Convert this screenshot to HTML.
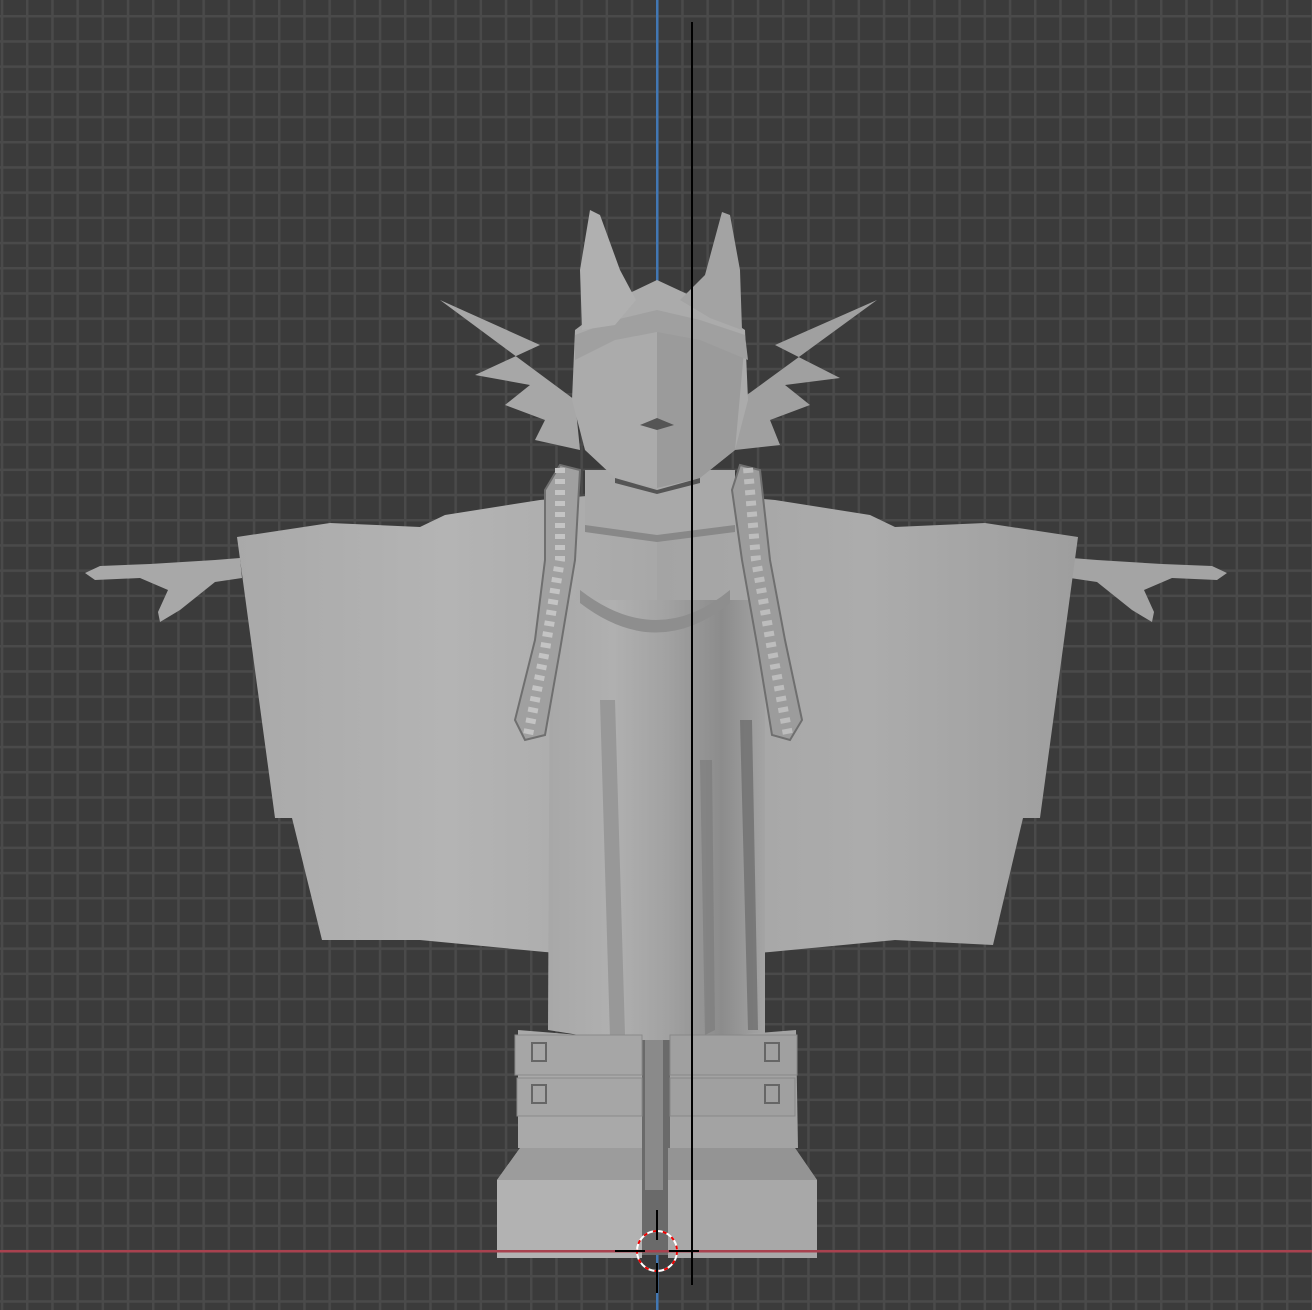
<!DOCTYPE html>
<html><head><meta charset="utf-8"><style>
html,body{margin:0;padding:0;background:#3d3d3d;}
svg{display:block}
</style></head><body>
<svg width="1312" height="1310" viewBox="0 0 1312 1310" xmlns="http://www.w3.org/2000/svg">
<defs>
<pattern id="g" x="0.8" y="15" width="25.2" height="25.2" patternUnits="userSpaceOnUse">
<rect width="25.2" height="25.2" fill="#3b3b3b"/>
<rect x="0" y="0" width="2.5" height="25.2" fill="#4a4a4a"/>
<rect x="0" y="0" width="25.2" height="2.5" fill="#4a4a4a"/>
</pattern>
<linearGradient id="cl" x1="0" y1="0" x2="1" y2="0">
<stop offset="0" stop-color="#a9a9a9"/><stop offset="0.5" stop-color="#b4b4b4"/><stop offset="1" stop-color="#a8a8a8"/>
</linearGradient>
<linearGradient id="cr" x1="0" y1="0" x2="1" y2="0">
<stop offset="0" stop-color="#a4a4a4"/><stop offset="0.5" stop-color="#acacac"/><stop offset="1" stop-color="#9e9e9e"/>
</linearGradient>
<linearGradient id="rb" x1="0" y1="0" x2="1" y2="0">
<stop offset="0" stop-color="#a8a8a8"/><stop offset="0.3" stop-color="#b0b0b0"/><stop offset="0.55" stop-color="#a2a2a2"/><stop offset="0.8" stop-color="#8c8c8c"/><stop offset="1" stop-color="#a4a4a4"/>
</linearGradient>
</defs>
<rect width="1312" height="1310" fill="url(#g)"/>
<rect x="656" y="0" width="2.5" height="1310" fill="#4277b3"/>
<!-- arms -->
<path d="M85,573 L100,566 L150,564 L215,560 L240,558 L242,578 L215,582 L180,610 L160,622 L158,612 L168,590 L140,578 L95,580 Z" fill="#a8a8a8"/>
<path d="M1227,573 L1212,566 L1162,564 L1097,560 L1072,558 L1070,578 L1097,582 L1132,610 L1152,622 L1154,612 L1144,590 L1172,578 L1217,580 Z" fill="#a4a4a4"/>
<!-- cloak -->
<path d="M237,537 L330,523 L420,527 L445,515 L540,500 L657,490 L657,960 L545,952 L420,940 L322,940 L292,818 L275,818 Z" fill="url(#cl)"/>
<path d="M1078,537 L985,523 L895,527 L870,515 L775,500 L657,490 L657,960 L770,952 L895,940 L993,945 L1023,818 L1040,818 Z" fill="url(#cr)"/>
<!-- robe center -->
<path d="M550,600 L765,600 L765,1035 L700,1042 L657,1045 L610,1040 L548,1030 Z" fill="url(#rb)"/>
<path d="M600,700 L615,700 L625,1035 L610,1038 Z" fill="#8f8f8f" opacity="0.7"/>
<path d="M740,720 L752,720 L758,1030 L748,1030 Z" fill="#6f6f6f" opacity="0.8"/>
<path d="M700,760 L712,760 L715,1030 L705,1035 Z" fill="#7a7a7a" opacity="0.6"/>
<path d="M580,590 Q657,650 730,590 L730,603 Q657,662 580,603 Z" fill="#8e8e8e"/>
<!-- neck -->
<path d="M585,470 L735,470 L735,525 L657,535 L585,525 Z" fill="#a9a9a9"/>
<path d="M585,525 L657,535 L735,525 L735,532 L657,542 L585,532 Z" fill="#888"/>
<!-- hair fins -->
<path d="M575,400 L440,300 L540,345 L475,375 L530,385 L505,405 L545,420 L535,440 L580,450 Z" fill="#a7a7a7"/>
<path d="M740,400 L877,300 L775,345 L840,378 L785,385 L810,405 L770,420 L780,445 L735,450 Z" fill="#a0a0a0"/>
<!-- head -->
<path d="M575,330 L615,300 L657,280 L700,300 L745,330 L748,400 L735,450 L700,478 L657,488 L615,478 L585,450 L572,400 Z" fill="#ababab"/>
<path d="M657,330 L700,330 L745,340 L735,450 L700,478 L657,488 Z" fill="#9b9b9b"/>
<path d="M615,320 L657,310 L700,320 L745,335 L748,360 L700,340 L657,332 L615,340 L575,360 L575,335 Z" fill="#a0a0a0"/>
<path d="M640,425 L657,418 L674,425 L657,430 Z" fill="#555"/>
<path d="M615,478 L657,490 L700,478 L700,483 L657,494 L615,483 Z" fill="#555"/>
<!-- horns -->
<path d="M590,210 L600,215 L620,270 L636,300 L615,325 L582,330 L580,270 Z" fill="#b0b0b0"/>
<path d="M722,212 L730,215 L740,270 L742,330 L710,318 L680,300 L705,275 Z" fill="#a3a3a3"/>
<!-- braids -->
<path d="M560,465 L580,470 L575,560 L560,650 L545,735 L525,740 L515,720 L535,640 L545,560 L545,490 Z" fill="#a0a0a0" stroke="#6f6f6f" stroke-width="2"/>
<path d="M560,468 L560,560 L545,650 L528,735" fill="none" stroke="#c4c4c4" stroke-width="10" stroke-dasharray="5 6"/>
<path d="M740,465 L760,470 L770,560 L785,640 L802,720 L790,740 L772,735 L758,650 L742,560 L732,490 Z" fill="#9c9c9c" stroke="#6f6f6f" stroke-width="2"/>
<path d="M748,468 L756,560 L772,650 L788,735" fill="none" stroke="#bdbdbd" stroke-width="10" stroke-dasharray="5 6"/>
<!-- legs gap -->
<rect x="640" y="1040" width="30" height="215" fill="#6a6a6a"/>
<rect x="645" y="1040" width="18" height="150" fill="#8a8a8a"/>
<!-- boots -->
<path d="M518,1030 L642,1040 L642,1148 L518,1148 Z" fill="#a9a9a9"/>
<path d="M670,1040 L796,1030 L798,1148 L670,1148 Z" fill="#a3a3a3"/>
<rect x="515" y="1035" width="127" height="40" fill="#a6a6a6" stroke="#8a8a8a"/>
<rect x="517" y="1078" width="125" height="38" fill="#a6a6a6" stroke="#8a8a8a"/>
<rect x="670" y="1035" width="127" height="40" fill="#a0a0a0" stroke="#888"/>
<rect x="670" y="1078" width="125" height="38" fill="#a0a0a0" stroke="#888"/>
<rect x="532" y="1043" width="14" height="18" fill="none" stroke="#666" stroke-width="2"/>
<rect x="532" y="1085" width="14" height="18" fill="none" stroke="#666" stroke-width="2"/>
<rect x="765" y="1043" width="14" height="18" fill="none" stroke="#666" stroke-width="2"/>
<rect x="765" y="1085" width="14" height="18" fill="none" stroke="#666" stroke-width="2"/>
<path d="M497,1180 L520,1148 L642,1148 L642,1258 L497,1258 Z" fill="#b2b2b2"/>
<path d="M497,1180 L642,1180 L642,1148 L520,1148 Z" fill="#9c9c9c"/>
<path d="M668,1148 L795,1148 L817,1180 L817,1258 L668,1258 Z" fill="#a8a8a8"/>
<path d="M668,1180 L817,1180 L795,1148 L668,1148 Z" fill="#949494"/>
<rect x="0" y="1250" width="1312" height="2.5" fill="#a8424f"/>
<rect x="691" y="22" width="2" height="1263" fill="#000"/>
<circle cx="657" cy="1251" r="20" fill="none" stroke="#fff" stroke-width="2"/>
<circle cx="657" cy="1251" r="20" fill="none" stroke="#e00" stroke-width="2" stroke-dasharray="4 6"/>
<rect x="615" y="1250" width="30" height="2" fill="#000"/>
<rect x="669" y="1250" width="30" height="2" fill="#000"/>
<rect x="656" y="1210" width="2" height="30" fill="#000"/>
<rect x="656" y="1263" width="2" height="30" fill="#000"/>
</svg>
</body></html>
